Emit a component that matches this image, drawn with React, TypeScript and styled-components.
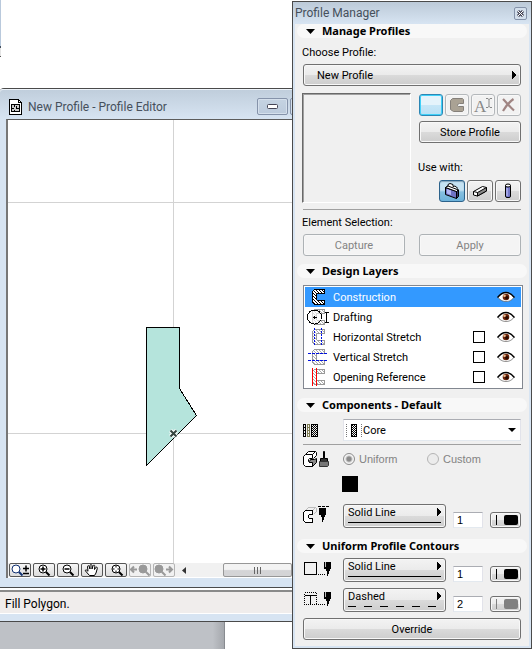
import React, { useState } from "react";
import styled, { createGlobalStyle, css } from "styled-components";

const GlobalStyle = createGlobalStyle`
  * { box-sizing: border-box; }
  body { margin: 0; background: #fff; }
  body, button, input, select {
    font-family: Roboto, "Noto Sans", sans-serif;
    font-size: 11px;
    line-height: 14px;
    color: #000;
  }
  svg { display: block; }
`;

/* ---------- page ---------- */

const Desktop = styled.div`
  display: grid;
  grid-template-columns: minmax(0, 1fr) 240px;
  min-height: 100vh;
  overflow: hidden;
`;

const Workspace = styled.main`
  display: flex;
  flex-direction: column;
  min-width: 0;
`;

const Backdrop = styled.div`
  height: 88px;
  display: flex;
  flex-direction: column;
`;

const WindowSliver = styled.div`
  width: 1px;
  height: 48px;
  background: #b9c9dc;
  border-bottom: 2px solid #44505f;
`;

const SliverFoot = styled.div`
  width: 1px;
  height: 9px;
  background: #e4e4e4;
  border-bottom: 1px solid #555;
`;

/* ---------- editor window ---------- */

const EditorWindow = styled.section`
  border-top: 1px solid #4a4a4a;
  border-top-left-radius: 4px;
  border-bottom: 1px solid #4a4a4a;
  background: #d7e4f2;
  padding: 0 0 9px 6px;
`;

const EditorTitle = styled.header`
  height: 30px;
  margin-left: -6px;
  padding: 6px 0 0 9px;
  display: flex;
  align-items: center;
  gap: 5px;
  overflow: hidden;
  box-shadow: inset 0 1px 0 #eef4fa;
  border-top-left-radius: 3px;
  background: linear-gradient(#bfcddb, #d7e4f2);
`;

const EditorHeading = styled.h1`
  flex: 1;
  margin: 0;
  font-size: 12px;
  font-weight: 400;
  line-height: 16px;
  color: #46505c;
  white-space: nowrap;
`;

const CaptionButtons = styled.div`
  display: flex;
  gap: 2px;
  width: 35px;
  overflow: hidden;
  align-self: flex-start;
  margin-top: 3px;
`;

const CaptionButton = styled.button`
  flex: 0 0 31px;
  height: 17px;
  padding: 0;
  display: grid;
  place-items: center;
  border: 1px solid #8593aa;
  border-radius: 2px;
  background: linear-gradient(#c5d3e2, #bccbdc);
  box-shadow: inset 0 0 0 1px #d5e0ec;
`;

const CanvasFrame = styled.div`
  border-top: 1px solid #5c5c5c;
  border-left: 2px solid #777;
  background: #fff;
`;

const Canvas = styled.svg`
  width: 100%;
  height: 443px;
`;

const CanvasBar = styled.div`
  display: flex;
  align-items: center;
  height: 15px;
  padding-left: 1px;
  gap: 2px;
  background: #f1f1f1;
  border-bottom: 1px solid #fff;
`;

const ZoomButton = styled.button`
  flex: 0 0 22px;
  height: 14px;
  padding: 0;
  display: grid;
  place-items: center;
  border: 1px solid #555;
  border-radius: 2px;
  background: linear-gradient(#f6f6f6, #dcdcdc);
  &:disabled { border-color: #b5b5b5; background: #f1f1f1; }
`;

const ScrollTrack = styled.div`
  flex: 1;
  display: flex;
  align-items: center;
  min-width: 0;
`;

const ScrollArrow = styled.button`
  width: 18px;
  height: 14px;
  padding: 0 0 0 5px;
  border: 0;
  background: none;
`;

const ScrollThumb = styled.div`
  width: 69px;
  height: 14px;
  margin-left: auto;
  display: flex;
  justify-content: center;
  align-items: center;
  gap: 2px;
  border: 1px solid #979797;
  border-radius: 2px;
  background: linear-gradient(#f3f3f3 45%, #d4d4d6 55%);
`;

const Grip = styled.span`
  width: 1px;
  height: 7px;
  background: #666;
`;

const StatusBar = styled.footer`
  height: 34px;
  padding: 2px 0 7px;
  background: linear-gradient(#fff 2px, #d7e4f2 2px);
  border-bottom: 1px solid #4a4a4a;
`;

const StatusText = styled.p`
  margin: 0;
  height: 24px;
  padding: 4px 0 0 5px;
  border-top: 2px solid #8a8a8a;
  border-bottom: 1px solid #fff;
  background: #f0edec;
  font-size: 12px;
  line-height: 16px;
`;

const Underlay = styled.div`
  flex: 1;
  display: flex;
  min-height: 27px;
`;

const GreyArea = styled.div`
  flex: 0 1 225px;
  border-right: 1px solid #888b90;
  background: linear-gradient(90deg, #bec1c6 95%, #a5a8ad);
`;

/* ---------- palette ---------- */

const Palette = styled.aside`
  margin-top: 1px;
  border: 1px solid #4a4a4a;
  background: #d7e4f2;
  padding: 0 2px 2px;
  align-self: start;
`;

const PaletteTitle = styled.header`
  height: 22px;
  margin: 0 -2px;
  padding: 0 4px 0 2px;
  display: flex;
  align-items: center;
  justify-content: space-between;
  background: linear-gradient(#bccad8, #d7e4f2);
`;

const PaletteHeading = styled.h2`
  margin: 0;
  font-size: 12px;
  line-height: 16px;
  font-weight: 400;
  color: #46505c;
`;

const CloseButton = styled.button`
  width: 13px;
  height: 13px;
  padding: 0;
  display: grid;
  place-items: center;
  border: 1px solid #8593aa;
  border-radius: 2px;
  background: #d3dfec;
`;

const PaletteBody = styled.div`
  background: #f0f0f0;
  padding: 0 8px 6px;
`;

const SectionHeading = styled.h3`
  height: 14px;
  margin: 0 -6px;
  padding-left: 9px;
  display: flex;
  align-items: center;
  gap: 7px;
  border-radius: 7px;
  background: #f8f8f8;
  font-family: "Noto Sans", sans-serif;
  font-size: 11px;
  line-height: 14px;
  font-weight: 700;
  white-space: nowrap;
`;

const Section = styled.section<{ $bottom: number }>`
  display: flex;
  flex-direction: column;
  padding-bottom: ${(p) => p.$bottom}px;
`;

const SectionBody = styled.div<{ $top?: number; $gap: number }>`
  display: flex;
  flex-direction: column;
  gap: ${(p) => p.$gap}px;
  padding-top: ${(p) => p.$top ?? 7}px;
`;

const face = css`
  border: 1px solid #707070;
  border-radius: 3px;
  background: linear-gradient(#f3f3f3, #ebebeb 48%, #dadada 52%, #cdcdcd);
  box-shadow: inset 0 0 0 1px #f8f8f8;
`;

const PushButton = styled.button`
  ${face}
  height: 22px;
  padding: 2px 0 0;
  &:disabled { border-color: #adb2b5; background: #f4f4f4; color: #838383; }
`;

const ToolButton = styled.button<{ $tone?: "glow" | "active" }>`
  ${face}
  height: 22px;
  padding: 0;
  display: grid;
  place-items: center;
  &:disabled { border-color: #b4b8bb; background: #f2f2f2; }
  ${(p) => p.$tone === "glow" && css`
    border-color: #2c86b4;
    background: linear-gradient(#e4f3fb 50%, #c6e6f7 50%, #b8e0f5);
    box-shadow: inset 0 0 0 1px #3fd0f8;
  `}
  ${(p) => p.$tone === "active" && css`
    border-color: #2c628b;
    background: linear-gradient(#c5e2f2 45%, #86bfdf 55%, #6cb2da);
    box-shadow: inset 0 1px 1px #84a4b8;
  `}
`;

const Stack = styled.div`
  display: grid;
  min-width: 0;
  & > * { grid-area: 1 / 1; min-width: 0; }
  & > svg { pointer-events: none; }
`;

const PopupSelect = styled.select`
  ${face}
  appearance: none;
  width: 100%;
  height: 22px;
  padding: 2px 20px 0 13px;
`;

const PopupArrow = styled.svg`
  place-self: center end;
  margin-right: 5px;
`;

const PreviewRow = styled.div`
  display: grid;
  grid-template-columns: minmax(0, 1fr) 102px;
  gap: 8px;
  margin-left: -1px;
`;

const Preview = styled.div`
  height: 110px;
  border: 1px solid;
  border-color: #696969 #fff #fff #696969;
  box-shadow: inset 1px 1px 0 #a0a0a0;
`;

const PreviewTools = styled.div`
  display: flex;
  flex-direction: column;
  justify-content: space-between;
  padding: 1px 0;
`;

const ToolGroup = styled.div<{ $gap: number }>`
  display: flex;
  flex-direction: column;
  gap: ${(p) => p.$gap}px;
`;

const ToolRow = styled.div<{ $cols: number; $inset?: number }>`
  display: grid;
  grid-template-columns: repeat(${(p) => p.$cols}, 1fr);
  gap: 2px;
  padding-left: ${(p) => p.$inset ?? 0}px;
`;

const captionText = css`
  display: block;
  margin-left: -1px;
  height: 14px;
  line-height: 16px;
  white-space: nowrap;
`;

const Label = styled.label`${captionText}`;
const Caption = styled.span`${captionText}`;

const Rule = styled.hr`
  width: 100%;
  height: 1px;
  margin: 0;
  border: 0;
  background: #a0a0a0;
`;

const Pair = styled.div`
  display: grid;
  grid-template-columns: 1fr 1fr;
  gap: 14px;
`;

const LayerList = styled.ul`
  margin: 0 -2px 0 0;
  padding: 1px;
  list-style: none;
  border: 1px solid #828790;
  background: #fff;
`;

const LayerRow = styled.li<{ $selected: boolean }>`
  height: 20px;
  display: grid;
  grid-template-columns: 28px minmax(0, 1fr) 24px 18px;
  align-items: center;
  padding-right: 6px;
  background: ${(p) => (p.$selected ? "#3399ff" : "transparent")};
  color: ${(p) => (p.$selected ? "#fff" : "#000")};
`;

const LayerName = styled.button`
  padding: 2px 0 0;
  border: 0;
  background: none;
  color: inherit;
  text-align: left;
  white-space: nowrap;
`;

const LayerCheck = styled.input`
  appearance: none;
  width: 12px;
  height: 12px;
  margin: 0;
  border: 1px solid #000;
  background: #fff;
  &:checked { background: #555; }
`;

const EyeButton = styled.button`
  grid-column: 4;
  width: 18px;
  height: 12px;
  padding: 0;
  border: 0;
  background: none;
`;

const FieldRow = styled.div`
  display: grid;
  grid-template-columns: 40px minmax(0, 1fr);
  align-items: center;
`;

const CoreSelect = styled.select`
  appearance: none;
  width: 100%;
  height: 22px;
  padding: 2px 16px 0 19px;
  border: 1px solid;
  border-color: #abadb3 #e2e3ea #e3e9ef #e2e3ea;
  background: #fff;
`;

const Radios = styled.div`
  display: grid;
  grid-template-columns: 84px 1fr;
`;

const RadioLabel = styled.label`
  display: flex;
  align-items: center;
  gap: 4px;
  font-family: "Liberation Sans", sans-serif;
  color: #838383;
`;

const Radio = styled.input`
  appearance: none;
  width: 12px;
  height: 12px;
  margin: 0;
  border: 1px solid #b4b4b4;
  border-radius: 50%;
  background: #ececec;
  &:checked {
    border-color: #8c8c8c;
    background: radial-gradient(circle, #8a8a8a 2px, #c4c4c4 3px, #f4f4f4 4px);
  }
`;

const Swatch = styled.button`
  width: 16px;
  height: 16px;
  padding: 0;
  margin-left: 39px;
  border: 0;
  background: #000;
`;

const PenRow = styled.div`
  display: grid;
  grid-template-columns: 33px minmax(0, 1fr) 30px 31px;
  column-gap: 7px;
  align-items: end;
  & > svg { align-self: start; margin-top: 2px; }
`;

const LineSelect = styled.select`
  ${face}
  appearance: none;
  width: 100%;
  height: 24px;
  padding: 0 12px 7px 4px;
`;

const LineArrow = styled.svg`
  place-self: start end;
  margin: 4px 5px 0 0;
`;

const LineSample = styled.svg`
  place-self: end stretch;
  width: auto;
  height: 1px;
  margin: 0 5px 5px;
`;

const PenNumber = styled.input`
  width: 30px;
  height: 16px;
  padding: 0 3px;
  border: 1px solid;
  border-color: #abadb3 #e2e3ea #e3e9ef #e2e3ea;
  background: #fff;
  font-family: "Liberation Sans", sans-serif;
`;

const PenButton = styled.button<{ $ink: string }>`
  ${face}
  height: 16px;
  padding: 0 2px 0 5px;
  display: flex;
  align-items: center;
  justify-content: space-between;
  color: ${(p) => p.$ink};
`;

const PenWeight = styled.span`
  width: 1px;
  height: 10px;
  background: currentColor;
`;

const PenColor = styled.span`
  width: 14px;
  height: 10px;
  border-radius: 2px;
  background: currentColor;
`;

/* ---------- drawings ---------- */

const crisp = { shapeRendering: "crispEdges" as const };

const ArrowRight = ({ as: Tag }: { as: React.ElementType }) => (
  <Tag width="4" height="8" {...crisp}><path d="M0 0l4 4-4 4z" /></Tag>
);

const Disclosure = () => (
  <svg width="9" height="5" aria-hidden="true"><path d="M0 0h9L4.500 5z" /></svg>
);

const Hatch = ({ id, color }: { id: string; color: string }) => (
  <defs>
    <pattern id={id} width="3" height="3" patternUnits="userSpaceOnUse">
      <rect width="3" height="3" fill="#fff" />
      <path d="M0 0h1v1H0zM1 1h1v1H1zM2 2h1v1H2z" fill={color} />
    </pattern>
  </defs>
);

const PROFILE = "M9.500 1.500h10v4h-7l-1 1v5l1 1h7v4h-10l-2-2v-11z";

type LayerKind = "construction" | "drafting" | "horizontal" | "vertical" | "opening";

const LayerIcon = ({ kind }: { kind: LayerKind }) => {
  const dark = kind === "construction";
  return (
    <svg width="26" height="18" {...crisp} fill="none" aria-hidden="true">
      <Hatch id={`hatch-${kind}`} color={dark ? "#000" : "#aaa"} />
      <path d={PROFILE} fill={`url(#hatch-${kind})`} stroke={dark ? "#000" : "#999"} />
      {kind === "drafting" && (
        <>
          <circle cx="9.500" cy="9" r="7" stroke="#000" fill="#fff" fillOpacity=".6" />
          <path d="M8 9.500h4M9.500 8v3M20 4.500h4M20 14.500h4M21.500 4v11" stroke="#000" />
        </>
      )}
      {kind === "horizontal" && <path d="M9.500 0v18M16.500 0v18" stroke="#0010e0" strokeDasharray="2 1" />}
      {kind === "vertical" && <path d="M3 5.500h20M3 12.500h20" stroke="#0010e0" strokeDasharray="3 1" />}
      {kind === "opening" && <path d="M7.500 0v18M11.500 0v18" stroke="#f00" />}
    </svg>
  );
};

const Eye = () => (
  <svg width="18" height="12" aria-hidden="true">
    <path d="M1 6.500C4 2 7 1.500 9 1.500s5 1 8 5C14 10 11 10.500 9 10.500S4 10 1 6.500z" fill="#fff" stroke="#555" strokeWidth=".7" />
    <path d="M.5 6.500C4 2 7 1.500 9 1.500s5 .5 8.500 5" fill="none" stroke="#000" strokeWidth="1.500" />
    <circle cx="9" cy="6" r="3.300" fill="#6b2409" />
    <circle cx="9.800" cy="6.800" r="1.700" fill="#260800" />
    <circle cx="7.500" cy="4.800" r="1.300" fill="#e9b98c" />
  </svg>
);

const PageIcon = () => (
  <svg width="14" height="16" {...crisp} fill="none" stroke="#000" aria-hidden="true">
    <path d="M.5 .5h9l3 3v12H.5z" fill="#fff" />
    <path d="M9.500 .5v3h3" />
    <path d="M2.500 5.500h8v7h-8z" fill="#ccc" />
    <path d="M5.500 5v3M2 9.500h3M7.500 9.500h3M7.500 7v3M5.500 10.500v2" />
    <path d="M1 15.500h12" />
  </svg>
);

const Lens = ({ cx = 9, color = "#000", fill = "#fff", children }: { cx?: number; color?: string; fill?: string; children?: React.ReactNode }) => (
  <svg width="20" height="12" stroke={color} fill="none" aria-hidden="true">
    <circle cx={cx} cy="5" r="4" fill={fill} />
    <path d={`M${cx + 3} 8l3.500 3.500`} strokeWidth="2" />
    {children}
  </svg>
);

const Hand = () => (
  <svg width="16" height="12" fill="#fff" stroke="#000" aria-hidden="true">
    <path d="M5.500 11.500L1.500 7c-.6-1.500 1-1.500 2.500.3L3.500 2.500c.3-1.200 1.500-1 1.800.2L6 5V1.500c.2-1.300 1.700-1.300 2 0V5l1-3.200c.5-1.200 2-.8 1.800.5L10.500 5.500l1.300-2c.9-.9 1.900 0 1.500 1L12 9l-1.500 2.500z" />
  </svg>
);

const WallIcon = () => (
  <svg width="18" height="18" stroke="#000" strokeLinejoin="round" aria-hidden="true">
    <path d="M2.500 5.500L5 4V2.500l2-1 3 1v2l2-.5 3 2.500" fill="#fff" />
    <path d="M2.500 5.500l11 4v7l-11-4z" fill="#6f73c4" />
    <path d="M4 7l4 1.500v4.500L4 11.500z" fill="#b3b8f2" stroke="none" />
    <path d="M2.500 5.500L5 4l10.500 4-2 1.500z" fill="#fff" />
    <path d="M15.500 8v6.500l-2 2v-7z" fill="#34366e" />
  </svg>
);

const BeamIcon = () => (
  <svg width="18" height="14" stroke="#000" strokeLinejoin="round" aria-hidden="true">
    <path d="M2.500 7.500l9-5 4 1v3.500l-9 5-4-1z" fill="#fff" />
    <path d="M6.500 8.500v3.500l9-5V3.500z" fill="#888" />
    <path d="M2.500 7.500l4 1" />
  </svg>
);

const ColumnIcon = () => (
  <svg width="8" height="16" stroke="#000" aria-hidden="true">
    <rect x="1.500" y="1.500" width="5" height="13" rx="1.500" fill="#7478c8" />
    <path d="M3 5v8" stroke="#c9ccff" />
    <ellipse cx="4" cy="2.500" rx="2.500" ry="1.500" fill="#fff" />
  </svg>
);

const ProfileGlyph = () => (
  <svg width="18" height="16" aria-hidden="true">
    <path d="M4.500 1.500h10l1 1v4h-4l-2 1v1l1 1h5v4l-1 1h-9l-3-2v-9z" fill="#aaa294" stroke="#85807a" />
  </svg>
);

const GlyphSvg = styled.svg`
  overflow: visible;
`;

const TextGlyph = () => (
  <GlyphSvg width="20" height="18" aria-hidden="true">
    <text x="1" y="16" fontFamily="Liberation Serif, serif" fontSize="17" fill="#888">A</text>
    <path d="M13 2.500h2l1 1 1-1h2M16 3v8M13 11.500h2l1-1 1 1h2" fill="none" stroke="#888" />
  </GlyphSvg>
);

const CrossGlyph = () => (
  <svg width="16" height="14" fill="none" stroke="#a08583" strokeWidth="2.200" aria-hidden="true">
    <path d="M2 1c3 3 7 8 11 11.500M12.500 1C8 4 5 8 2 13" />
  </svg>
);

const CompositeIcon = () => (
  <svg width="16" height="15" {...crisp} aria-hidden="true">
    <defs>
      <pattern id="checks" width="2" height="2" patternUnits="userSpaceOnUse">
        <path d="M0 0h1v1H0zM1 1h1v1H1z" />
      </pattern>
    </defs>
    <path d="M.5 1v13M2.500 1v13" stroke="#000" />
    <path d="M1.500 1v13" stroke="#000" strokeDasharray="1 2" />
    <path d="M4.500 1v13M6.500 1v13" stroke="#7c7a50" />
    <path d="M5.500 1v13" stroke="#7c7a50" strokeDasharray="1 2" />
    <rect x="8" y="1" width="7" height="13" fill="url(#checks)" />
    <path d="M8.500 1v13M14.500 1v13M8 1.500h7M8 13.500h7" stroke="#000" />
  </svg>
);

const CoreIcon = styled.svg`
  align-self: center;
  margin-left: 3px;
`;

const CoreDrawing = () => (
  <CoreIcon width="17" height="14" {...crisp}>
    <path d="M.5 1v13M15.500 1v13" stroke="#777" strokeDasharray="1 1" />
    <rect x="5" y="1" width="6" height="13" fill="url(#checks)" />
    <path d="M5.500 1v13M10.500 1v13M5 1.500h6M5 13.500h6" stroke="#000" fill="none" />
  </CoreIcon>
);

const Block3D = ({ pale }: { pale?: boolean }) => (
  <>
    <path d="M2.500 4.500l3-3h7l1 1v3l-3 3M9.500 4.500l3-3" fill={pale ? "none" : "#fff"} stroke={pale ? "#bbb" : "#000"} />
    <path d="M2.500 4.500h7v4h-3l-1 1v2l1 1h3v4h-7l-2-2v-8z" fill="#fff" stroke="#000" />
  </>
);

const SurfaceIcon = () => (
  <svg width="27" height="18" aria-hidden="true">
    <Block3D />
    <path d="M6.500 11.500l1-2h4l2-1v4l-4 4v-4h-3z" fill="#888" stroke="#000" />
    <path d="M20.500 1.500h1v7h3v3h-7v-3h3z" fill="#333" stroke="#000" />
    <path d="M16.500 11.500h9v4l-1 1h-8z" fill="#777" stroke="#333" />
  </svg>
);

const Pen = ({ x }: { x: number }) => (
  <path transform={`translate(${x} 0)`} d="M0 2h7v7H6v2H5v3H4v2H3v-5H2V9H0z" />
);

const BlockPenIcon = () => (
  <svg width="27" height="18" {...crisp} aria-hidden="true">
    <Block3D pale />
    <path d="M15 .5h11" stroke="#000" strokeDasharray="3 1" />
    <Pen x={16} />
  </svg>
);

const ContourPenIcon = ({ inner }: { inner?: boolean }) => (
  <svg width="29" height="17" {...crisp} fill="none" stroke="#000" aria-hidden="true">
    <rect x="1.500" y="2.500" width="12" height="12" strokeDasharray={inner ? "1 1" : undefined} />
    {inner && <path d="M2 5.500h12M7.500 6v9" />}
    <path d="M15 14.500h8" strokeDasharray="1 1" />
    <g fill="#000" stroke="none"><Pen x={21} /></g>
    <path d="M22.500 2v5" stroke="#bbb" />
  </svg>
);

/* ---------- parts ---------- */

const Heading = ({ children }: { children: string }) => (
  <SectionHeading><Disclosure />{children}</SectionHeading>
);

const zoomTools = [
  { name: "Zoom", icon: <Lens cx={6} color="#123273"><path d="M13 4.500h6M16 1.500v6M13 9.500h6" stroke="#000" strokeWidth="1.500" /></Lens> },
  { name: "Zoom in", icon: <Lens><path d="M6.500 5h5M9 2.500v5" strokeWidth="1.500" /></Lens> },
  { name: "Zoom out", icon: <Lens><path d="M6.500 5h5" strokeWidth="1.500" /></Lens> },
  { name: "Pan", icon: <Hand /> },
  { name: "Fit in window", icon: <Lens cx={10}><path d="M6.500 5h2M11.500 5h2M10 1.500v2M10 6.500v2" /></Lens> },
  { name: "Previous zoom", off: true, icon: <Lens cx={13} color="#999" fill="#999"><path d="M1 5.500h6M4 2.500l-3 3 3 3" strokeWidth="2" /></Lens> },
  { name: "Next zoom", off: true, icon: <Lens cx={5} color="#999" fill="#999"><path d="M12 5.500h6M15 2.500l3 3-3 3" strokeWidth="2" /></Lens> },
];

const ProfileEditor = () => (
  <EditorWindow aria-label="Profile Editor">
    <EditorTitle>
      <PageIcon />
      <EditorHeading>New Profile - Profile Editor</EditorHeading>
      <CaptionButtons>
        <CaptionButton aria-label="Minimize">
          <svg width="12" height="5"><rect x=".5" y=".5" width="10" height="4" rx="1" fill="#fff" stroke="#445" /></svg>
        </CaptionButton>
        <CaptionButton aria-label="Maximize" />
      </CaptionButtons>
    </EditorTitle>
    <CanvasFrame>
      <Canvas role="img" aria-label="Profile drawing">
        <g stroke="#d3d3d3" shapeRendering="crispEdges">
          <path d="M165.500 0v443" />
          <line x1="0" x2="100%" y1="82.500" y2="82.500" />
          <line x1="0" x2="100%" y1="313.500" y2="313.500" />
        </g>
        <path d="M138.500 207.500h33v61l17 27-50 50z" fill="#b5e4dc" stroke="#000" shapeRendering="crispEdges" />
        <path d="M162.500 310.500l6 6M168.500 310.500l-6 6" stroke="#fff" strokeWidth="4" />
        <path d="M162.500 310.500l6 6M168.500 310.500l-6 6" stroke="#34443f" strokeWidth="2" />
      </Canvas>
      <CanvasBar>
        {zoomTools.map((t) => (
          <ZoomButton key={t.name} aria-label={t.name} disabled={t.off}>{t.icon}</ZoomButton>
        ))}
        <ScrollTrack>
          <ScrollArrow aria-label="Scroll left">
            <svg width="4" height="7"><path d="M4 0v7L0 3.500z" fill="#333" /></svg>
          </ScrollArrow>
          <ScrollThumb><Grip /><Grip /><Grip /></ScrollThumb>
        </ScrollTrack>
      </CanvasBar>
    </CanvasFrame>
  </EditorWindow>
);

const layers: { kind: LayerKind; name: string; check: boolean }[] = [
  { kind: "construction", name: "Construction", check: false },
  { kind: "drafting", name: "Drafting", check: false },
  { kind: "horizontal", name: "Horizontal Stretch", check: true },
  { kind: "vertical", name: "Vertical Stretch", check: true },
  { kind: "opening", name: "Opening Reference", check: true },
];

const PenSettings = ({ icon, title, line, pen, ink = "#000" }: { icon: React.ReactNode; title: string; line: string; pen: string; ink?: string }) => (
  <PenRow>
    {icon}
    <Stack>
      <LineSelect aria-label={`${title} line type`} defaultValue={line}>
        <option>Solid Line</option>
        <option>Dashed</option>
      </LineSelect>
      <ArrowRight as={LineArrow} />
      <LineSample {...crisp}>
        <line x1="0" x2="100%" y1=".5" y2=".5" stroke="#000" strokeDasharray={line === "Dashed" ? "8 8" : undefined} />
      </LineSample>
    </Stack>
    <PenNumber aria-label={`${title} pen number`} defaultValue={pen} />
    <PenButton aria-label={`${title} pen`} $ink={ink}><PenWeight /><PenColor /></PenButton>
  </PenRow>
);

const ProfileManager = () => {
  const [selected, setSelected] = useState("Construction");
  return (
    <Palette aria-label="Profile Manager">
      <PaletteTitle>
        <PaletteHeading>Profile Manager</PaletteHeading>
        <CloseButton aria-label="Close">
          <svg width="9" height="9"><path d="M2 2l5 5M7 2L2 7" stroke="#445" strokeWidth="3" /><path d="M2 2l5 5M7 2L2 7" stroke="#fff" /></svg>
        </CloseButton>
      </PaletteTitle>
      <PaletteBody>
        <Section $bottom={8}>
          <Heading>Manage Profiles</Heading>
          <SectionBody $gap={5}>
            <Label htmlFor="profile">Choose Profile:</Label>
            <Stack>
              <PopupSelect id="profile"><option>New Profile</option></PopupSelect>
              <ArrowRight as={PopupArrow} />
            </Stack>
          </SectionBody>
          <SectionBody $gap={6}>
            <PreviewRow>
              <Preview />
              <PreviewTools>
                <ToolGroup $gap={5}>
                  <ToolRow $cols={4}>
                    <ToolButton $tone="glow" aria-label="New" />
                    <ToolButton disabled aria-label="Duplicate"><ProfileGlyph /></ToolButton>
                    <ToolButton disabled aria-label="Rename"><TextGlyph /></ToolButton>
                    <ToolButton disabled aria-label="Delete"><CrossGlyph /></ToolButton>
                  </ToolRow>
                  <PushButton>Store Profile</PushButton>
                </ToolGroup>
                <ToolGroup $gap={6}>
                  <Caption>Use with:</Caption>
                  <ToolRow $cols={3} $inset={20}>
                    <ToolButton $tone="active" aria-label="Wall"><WallIcon /></ToolButton>
                    <ToolButton aria-label="Beam"><BeamIcon /></ToolButton>
                    <ToolButton aria-label="Column"><ColumnIcon /></ToolButton>
                  </ToolRow>
                </ToolGroup>
              </PreviewTools>
            </PreviewRow>
            <Rule />
          </SectionBody>
          <SectionBody $top={5} $gap={5}>
            <Caption>Element Selection:</Caption>
            <Pair>
              <PushButton disabled>Capture</PushButton>
              <PushButton disabled>Apply</PushButton>
            </Pair>
          </SectionBody>
        </Section>

        <Section $bottom={9}>
          <Heading>Design Layers</Heading>
          <SectionBody $gap={0}>
            <LayerList>
              {layers.map((l) => (
                <LayerRow key={l.name} $selected={selected === l.name}>
                  <LayerIcon kind={l.kind} />
                  <LayerName onClick={() => setSelected(l.name)}>{l.name}</LayerName>
                  {l.check && <LayerCheck type="checkbox" aria-label={l.name} />}
                  <EyeButton aria-label={`Show ${l.name}`}><Eye /></EyeButton>
                </LayerRow>
              ))}
            </LayerList>
          </SectionBody>
        </Section>

        <Section $bottom={11}>
          <Heading>Components - Default</Heading>
          <SectionBody $gap={3}>
            <FieldRow>
              <CompositeIcon />
              <Stack>
                <CoreSelect aria-label="Component"><option>Core</option></CoreSelect>
                <CoreDrawing />
                <PopupArrow width="8" height="4"><path d="M0 0h8L4 4z" /></PopupArrow>
              </Stack>
            </FieldRow>
            <Rule />
          </SectionBody>
          <SectionBody $top={5} $gap={8}>
            <FieldRow>
              <SurfaceIcon />
              <Radios>
                <RadioLabel><Radio type="radio" name="surface" defaultChecked disabled />Uniform</RadioLabel>
                <RadioLabel><Radio type="radio" name="surface" disabled />Custom</RadioLabel>
              </Radios>
            </FieldRow>
            <Swatch aria-label="Surface color" />
          </SectionBody>
          <SectionBody $top={12} $gap={0}>
            <PenSettings icon={<BlockPenIcon />} title="Component" line="Solid Line" pen="1" />
          </SectionBody>
        </Section>

        <Section $bottom={0}>
          <Heading>Uniform Profile Contours</Heading>
          <SectionBody $top={5} $gap={6}>
            <PenSettings icon={<ContourPenIcon />} title="Outer contour" line="Solid Line" pen="1" />
            <PenSettings icon={<ContourPenIcon inner />} title="Inner contour" line="Dashed" pen="2" ink="#808080" />
            <PushButton>Override</PushButton>
          </SectionBody>
        </Section>
      </PaletteBody>
    </Palette>
  );
};

export default function App() {
  return (
    <>
      <GlobalStyle />
      <Desktop>
        <Workspace>
          <Backdrop><WindowSliver /><SliverFoot /></Backdrop>
          <ProfileEditor />
          <StatusBar><StatusText>Fill Polygon.</StatusText></StatusBar>
          <Underlay><GreyArea /></Underlay>
        </Workspace>
        <ProfileManager />
      </Desktop>
    </>
  );
}
